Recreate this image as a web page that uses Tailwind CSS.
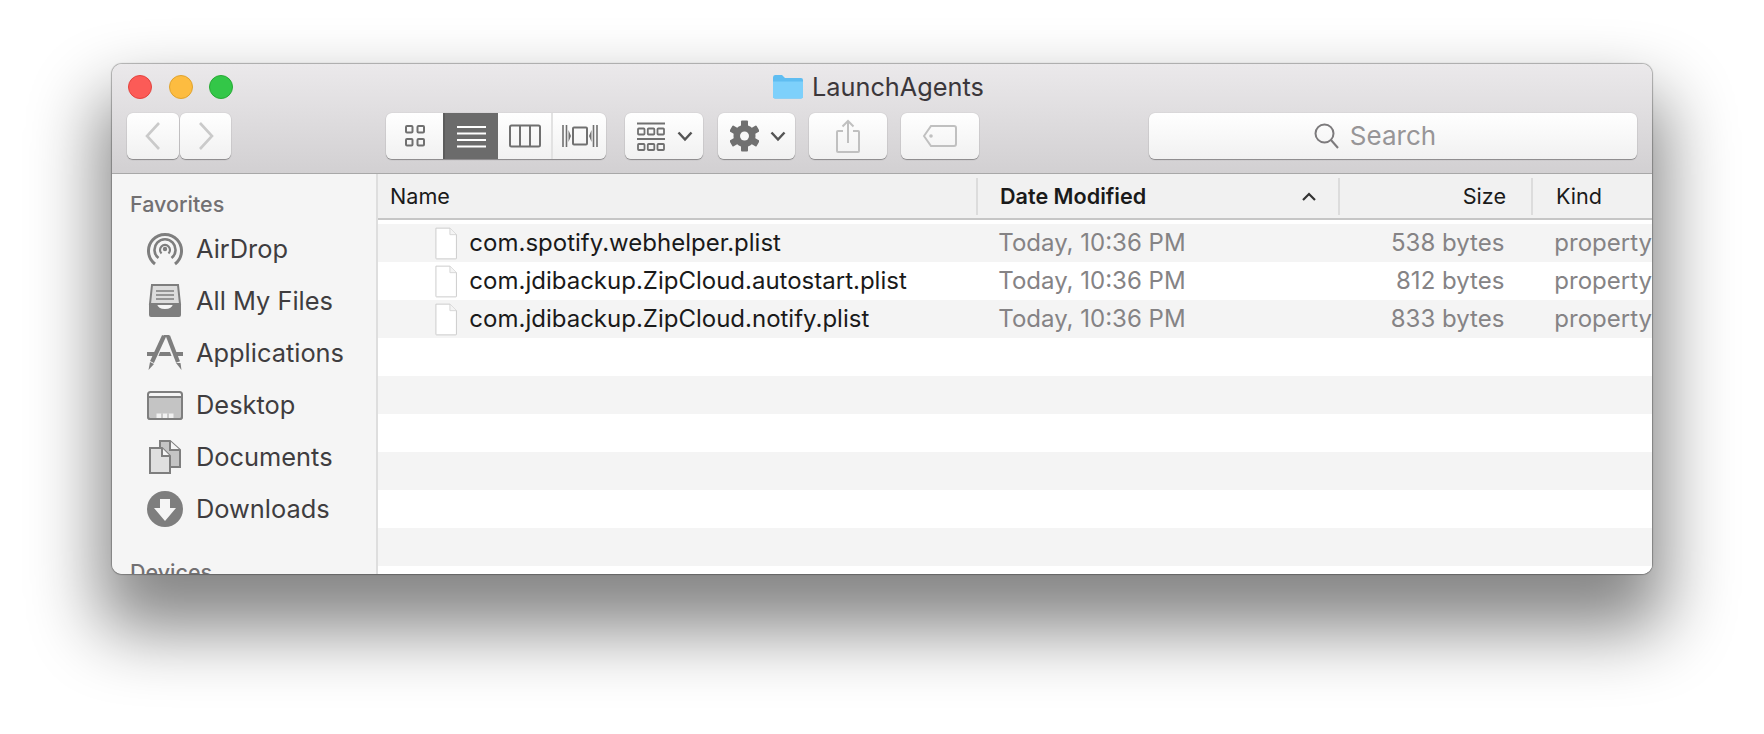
<!DOCTYPE html>
<html>
<head>
<meta charset="utf-8">
<script src="https://cdn.jsdelivr.net/npm/@tailwindcss/browser@4"></script>
</head>
<body class="bg-white overflow-hidden font-['Inter','Liberation_Sans',sans-serif]">
<div class="w-[1764px] h-[734px] pt-[64px] pl-[112px] overflow-hidden bg-white">
  <div class="w-[1540px] h-[510px] rounded-[10px] overflow-hidden flex flex-col shadow-[0_0_1px_1px_rgba(0,0,0,0.28),0_44px_70px_12px_rgba(0,0,0,0.48)]">
    <!-- toolbar -->
    <div class="h-[110px] shrink-0 flex flex-col bg-gradient-to-b from-[#ebe9eb] to-[#d2d0d2] border-b border-[#a8a8a8]">
      <div class="h-[49px] shrink-0 flex items-center pb-[4px]">
        <div class="flex gap-[16.5px] pl-[16px]">
          <div class="w-[24px] h-[24px] rounded-full bg-[#fc5b57] border border-[#e3433e]"></div>
          <div class="w-[24px] h-[24px] rounded-full bg-[#fdbc40] border border-[#e0a32e]"></div>
          <div class="w-[24px] h-[24px] rounded-full bg-[#33c748] border border-[#27aa35]"></div>
        </div>
        <svg class="ml-[540px]" width="30" height="25" viewBox="0 0 30 25"><path d="M0 3.5Q0 1 2 1H9L12 4H28Q30 4 30 6V22.5Q30 24.5 28 24.5H2Q0 24.5 0 22.5Z" fill="#5fbdf1"/><path d="M0 7.5H30V22.5Q30 24.5 28 24.5H2Q0 24.5 0 22.5Z" fill="#7dd0fb"/></svg>
        <span class="ml-[9px] text-[25.3px] leading-none text-[#3b373b]">LaunchAgents</span>
      </div>
      <div class="flex h-[46px] ml-[15px]">
        <!-- back / forward -->
        <div class="w-[52px] h-[46px] rounded-[6px] bg-gradient-to-b from-white to-[#f1f1f1] shadow-[0_1px_1px_rgba(0,0,0,0.35),0_0_1px_rgba(0,0,0,0.25)] flex items-center justify-center">
          <svg width="16" height="30" viewBox="0 0 16 30"><path d="M14 2L2 15L14 28" fill="none" stroke="#cacaca" stroke-width="2.6"/></svg>
        </div>
        <div class="ml-[1px] w-[51px] h-[46px] rounded-[6px] bg-gradient-to-b from-white to-[#f1f1f1] shadow-[0_1px_1px_rgba(0,0,0,0.35),0_0_1px_rgba(0,0,0,0.25)] flex items-center justify-center">
          <svg width="16" height="30" viewBox="0 0 16 30"><path d="M2 2L14 15L2 28" fill="none" stroke="#cacaca" stroke-width="2.6"/></svg>
        </div>
        <!-- view switcher -->
        <div class="ml-[155px] w-[220px] h-[46px] flex rounded-[6px] overflow-hidden bg-gradient-to-b from-white to-[#f1f1f1] shadow-[0_1px_1px_rgba(0,0,0,0.35),0_0_1px_rgba(0,0,0,0.25)]">
          <div class="w-[57px] flex items-center justify-center">
            <svg width="20" height="22" viewBox="0 0 20 22" fill="none" stroke="#707070" stroke-width="2"><rect x="1" y="1" width="6.5" height="6.5" rx="1"/><rect x="12.5" y="1" width="6.5" height="6.5" rx="1"/><rect x="1" y="14" width="6.5" height="6.5" rx="1"/><rect x="12.5" y="14" width="6.5" height="6.5" rx="1"/></svg>
          </div>
          <div class="w-[55px] bg-[#6b6b6b] border-l-2 border-[#5c5c5c] flex items-center justify-center">
            <svg width="29" height="23" viewBox="0 0 29 23" stroke="#fff" stroke-width="2"><path d="M0 2H29M0 8.5H29M0 15H29M0 21.5H29"/></svg>
          </div>
          <div class="w-[53px] flex items-center justify-center">
            <svg width="32" height="24" viewBox="0 0 32 24" fill="none" stroke="#707070" stroke-width="2"><rect x="1" y="1.5" width="30" height="21" rx="1.5"/><path d="M11 1.5V22.5M21 1.5V22.5"/></svg>
          </div>
          <div class="w-[55px] border-l-2 border-[#e2e2e2] flex items-center justify-center">
            <svg width="36" height="24" viewBox="0 0 36 24" fill="none" stroke="#707070" stroke-width="2"><rect x="11" y="3.500" width="14" height="17" rx="1"/><path d="M1 1V23M4.500 1V23M35 1V23M31.500 1V23" stroke-width="1.600"/><path d="M6.500 6L9 12L6.500 18ZM29.500 6L27 12L29.500 18Z" fill="#707070" stroke="none"/></svg>
          </div>
        </div>
        <!-- arrange -->
        <div class="ml-[19px] w-[78px] h-[46px] rounded-[6px] bg-gradient-to-b from-white to-[#f1f1f1] shadow-[0_1px_1px_rgba(0,0,0,0.35),0_0_1px_rgba(0,0,0,0.25)] flex items-center pl-[12px]">
          <svg width="28" height="29" viewBox="0 0 28 29" fill="none" stroke="#707070" stroke-width="1.800"><path d="M0 1.500H28M0 17H28" stroke-width="2"/><rect x="1" y="6.500" width="6.500" height="6" rx=".8"/><rect x="10.800" y="6.500" width="6.500" height="6" rx=".8"/><rect x="20.500" y="6.500" width="6.500" height="6" rx=".8"/><rect x="1" y="22" width="6.500" height="6" rx=".8"/><rect x="10.800" y="22" width="6.500" height="6" rx=".8"/><rect x="20.500" y="22" width="6.500" height="6" rx=".8"/></svg>
          <svg class="ml-[12px]" width="16" height="11" viewBox="0 0 16 11"><path d="M1.500 1.500L8 8.500L14.500 1.500" fill="none" stroke="#555" stroke-width="2.500"/></svg>
        </div>
        <!-- gear -->
        <div class="ml-[15px] w-[77px] h-[46px] rounded-[6px] bg-gradient-to-b from-white to-[#f1f1f1] shadow-[0_1px_1px_rgba(0,0,0,0.35),0_0_1px_rgba(0,0,0,0.25)] flex items-center pl-[12px]">
          <svg width="29" height="32" viewBox="-14.500 -16 29 32"><g fill="#707070"><rect x="-3.500" y="-15.500" width="7" height="31" rx="1"/><rect x="-3.500" y="-15.500" width="7" height="31" rx="1" transform="rotate(60)"/><rect x="-3.500" y="-15.500" width="7" height="31" rx="1" transform="rotate(120)"/><circle r="11"/></g><circle r="4.500" fill="#f8f8f8"/></svg>
          <svg class="ml-[11px]" width="16" height="11" viewBox="0 0 16 11"><path d="M1.500 1.500L8 8.500L14.500 1.500" fill="none" stroke="#555" stroke-width="2.500"/></svg>
        </div>
        <!-- share -->
        <div class="ml-[14px] w-[78px] h-[46px] rounded-[6px] bg-gradient-to-b from-white to-[#f1f1f1] shadow-[0_1px_1px_rgba(0,0,0,0.35),0_0_1px_rgba(0,0,0,0.25)] flex items-center justify-center">
          <svg width="24" height="34" viewBox="0 0 24 34" fill="none" stroke="#c0c0c0" stroke-width="2"><path d="M7 12H2Q1 12 1 13V32Q1 33 2 33H22Q23 33 23 32V13Q23 12 22 12H17"/><path d="M12 24V2M6.500 7.500L12 2L17.500 7.500"/></svg>
        </div>
        <!-- tag -->
        <div class="ml-[14px] w-[78px] h-[46px] rounded-[6px] bg-gradient-to-b from-white to-[#f1f1f1] shadow-[0_1px_1px_rgba(0,0,0,0.35),0_0_1px_rgba(0,0,0,0.25)] flex items-center justify-center">
          <svg width="34" height="22" viewBox="0 0 34 22" fill="none" stroke="#c0c0c0" stroke-width="2"><path d="M8 1H31Q33 1 33 3V19Q33 21 31 21H8L1 11Z"/><circle cx="8" cy="11" r="1.800" fill="#c0c0c0" stroke="none"/></svg>
        </div>
        <!-- search -->
        <div class="ml-[170px] w-[488px] h-[46px] rounded-[6px] bg-gradient-to-b from-white to-[#f1f1f1] shadow-[0_1px_1px_rgba(0,0,0,0.35),0_0_1px_rgba(0,0,0,0.25)] flex items-center justify-center pr-[36px]">
          <svg width="25" height="26" viewBox="0 0 25 26" fill="none" stroke="#7c7a7c" stroke-width="2"><circle cx="10.500" cy="10.500" r="9"/><path d="M17 17L24 25"/></svg>
          <span class="ml-[11px] text-[26px] leading-none text-[#979597]">Search</span>
        </div>
      </div>
    </div>
    <!-- body -->
    <div class="flex flex-1 min-h-0">
      <!-- sidebar -->
      <div class="w-[266px] shrink-0 bg-[#f5f5f5] border-r-2 border-[#dedede] overflow-hidden pl-[18px] pt-[18px]">
        <div class="text-[21.500px] leading-[24px] font-medium text-[#727072] h-[24px]">Favorites</div>
        <div class="mt-[7px] flex flex-col text-[25.400px] text-[#3f3d3f]">
          <div class="h-[52px] flex items-center">
            <svg class="ml-[17px] w-[36px]" height="36" viewBox="0 0 36 36" fill="none" stroke="#7e7e7e"><path d="M8 33A16.500 16.500 0 1 1 28 33" stroke-width="3"/><path d="M11.500 27A10.500 10.500 0 1 1 24.500 27" stroke-width="2.600"/><path d="M14.500 22.500A5 5 0 1 1 21.500 22.500" stroke-width="2.200"/><circle cx="18" cy="18" r="2.200" fill="#7e7e7e" stroke="none"/></svg>
            <span class="ml-[13px]">AirDrop</span>
          </div>
          <div class="h-[52px] flex items-center">
            <svg class="ml-[17px] w-[36px]" height="34" viewBox="0 0 36 34"><path d="M5 1H31L33 20H3Z" fill="#dcdcdc" stroke="#7e7e7e" stroke-width="2"/><path d="M9 7H27M9 11H27M9 15H27" stroke="#7e7e7e" stroke-width="1.600"/><path d="M2 20H10Q11 25 18 25Q25 25 26 20H34V31Q34 33 32 33H4Q2 33 2 31Z" fill="#7e7e7e"/></svg>
            <span class="ml-[13px]">All My Files</span>
          </div>
          <div class="h-[52px] flex items-center">
            <svg class="ml-[17px] w-[36px]" height="36" viewBox="0 0 36 36"><path d="M0 17H9L7 21H0ZM27 17H36V21H29ZM13 17H23L24.500 21H11.500Z" fill="#7e7e7e"/><path d="M21 1L31 27" stroke="#7e7e7e" stroke-width="4.200" fill="none"/><path d="M29 28H33.500L34.500 35Z" fill="#7e7e7e"/><path d="M17 1L5 27" stroke="#7e7e7e" stroke-width="4.200" fill="none"/><path d="M3 27L7 29L1.500 35Z" fill="#7e7e7e"/><path d="M16.500 1H22" stroke="#7e7e7e" stroke-width="2"/></svg>
            <span class="ml-[13px]">Applications</span>
          </div>
          <div class="h-[52px] flex items-center">
            <svg class="ml-[17px] w-[36px]" height="29" viewBox="0 0 36 29"><rect x="1" y="1" width="34" height="27" rx="2.500" fill="#f5f5f5" stroke="#7e7e7e" stroke-width="2"/><path d="M1 6H35V25.500Q35 28 32.500 28H3.500Q1 28 1 25.500Z" fill="#c4c4c4" stroke="#7e7e7e" stroke-width="2"/><path d="M9.500 22.500H26.500V27H9.500Z" fill="#f1f1f1"/><path d="M15 22.500V27M21 22.500V27" stroke="#a0a0a0" stroke-width="1"/></svg>
            <span class="ml-[13px]">Desktop</span>
          </div>
          <div class="h-[52px] flex items-center">
            <svg class="ml-[19px] w-[32px]" height="34" viewBox="0 0 32 34"><path d="M11 1H21L31 10V27H11Z" fill="#c4c4c4" stroke="#7e7e7e" stroke-width="2"/><path d="M21 1V10H31" fill="#f5f5f5" stroke="#7e7e7e" stroke-width="2"/><path d="M1 8H13L21 16V33H1Z" fill="#e0e0e0" stroke="#7e7e7e" stroke-width="2"/><path d="M13 8V16H21" fill="#f5f5f5" stroke="#7e7e7e" stroke-width="2"/></svg>
            <span class="ml-[15px]">Documents</span>
          </div>
          <div class="h-[52px] flex items-center">
            <svg class="ml-[17px] w-[36px]" height="36" viewBox="0 0 36 36"><circle cx="18" cy="18" r="18" fill="#7e7e7e"/><path d="M13 8H23V17H29L18 30L7 17H13Z" fill="#f5f5f5"/></svg>
            <span class="ml-[13px]">Downloads</span>
          </div>
        </div>
        <div class="mt-[25px] text-[21.500px] leading-[24px] font-medium text-[#727072]">Devices</div>
      </div>
      <!-- list -->
      <div class="flex-1 min-w-0 overflow-hidden bg-white">
        <div class="h-[46px] bg-[#f1f1f1] border-b-2 border-[#c6c6c6] flex items-center text-[21.600px] text-[#1a1a1a] whitespace-nowrap">
          <div class="w-[600px] shrink-0 pl-[12px] h-[37px] flex items-center border-r-2 border-[#dcdcdc]">Name</div>
          <div class="w-[362px] shrink-0 pl-[22px] pr-[22px] h-[37px] flex items-center justify-between border-r-2 border-[#dcdcdc]"><span class="font-semibold">Date Modified</span>
            <svg width="14" height="9" viewBox="0 0 14 9"><path d="M1 8L7 2L13 8" fill="none" stroke="#333" stroke-width="2.200"/></svg>
          </div>
          <div class="w-[193px] shrink-0 pr-[25px] h-[37px] flex items-center justify-end border-r-2 border-[#dcdcdc]">Size</div>
          <div class="pl-[23px]">Kind</div>
        </div>
        <div class="h-[4px]"></div>
        <div class="text-[24px] whitespace-nowrap">
          <div class="h-[38px] bg-[#f4f4f4] flex items-center">
            <svg class="ml-[57px]" width="24" height="35" viewBox="0 0 24 35"><path d="M1 1H16L23 8V33.500Q23 34 22.500 34H1.500Q1 34 1 33.500Z" fill="#fff" stroke="#c9c9c9"/><path d="M16 1V8H23" fill="#f4f4f4" stroke="#d4d4d4"/></svg>
            <div class="ml-[12px] w-[529px] shrink-0 text-[#1a1a1a]">com.spotify.webhelper.plist</div>
            <div class="w-[300px] shrink-0 text-[#858385]">Today, 10:36 PM</div>
            <div class="w-[206px] shrink-0 text-right text-[#858385]">538 bytes</div>
            <div class="pl-[50px] text-[#858385]">property</div>
          </div>
          <div class="h-[38px] bg-white flex items-center">
            <svg class="ml-[57px]" width="24" height="35" viewBox="0 0 24 35"><path d="M1 1H16L23 8V33.500Q23 34 22.500 34H1.500Q1 34 1 33.500Z" fill="#fff" stroke="#c9c9c9"/><path d="M16 1V8H23" fill="#f4f4f4" stroke="#d4d4d4"/></svg>
            <div class="ml-[12px] w-[529px] shrink-0 text-[#1a1a1a]">com.jdibackup.ZipCloud.autostart.plist</div>
            <div class="w-[300px] shrink-0 text-[#858385]">Today, 10:36 PM</div>
            <div class="w-[206px] shrink-0 text-right text-[#858385]">812 bytes</div>
            <div class="pl-[50px] text-[#858385]">property</div>
          </div>
          <div class="h-[38px] bg-[#f4f4f4] flex items-center">
            <svg class="ml-[57px]" width="24" height="35" viewBox="0 0 24 35"><path d="M1 1H16L23 8V33.500Q23 34 22.500 34H1.500Q1 34 1 33.500Z" fill="#fff" stroke="#c9c9c9"/><path d="M16 1V8H23" fill="#f4f4f4" stroke="#d4d4d4"/></svg>
            <div class="ml-[12px] w-[529px] shrink-0 text-[#1a1a1a]">com.jdibackup.ZipCloud.notify.plist</div>
            <div class="w-[300px] shrink-0 text-[#858385]">Today, 10:36 PM</div>
            <div class="w-[206px] shrink-0 text-right text-[#858385]">833 bytes</div>
            <div class="pl-[50px] text-[#858385]">property</div>
          </div>
          <div class="h-[38px] bg-white"></div>
          <div class="h-[38px] bg-[#f4f4f4]"></div>
          <div class="h-[38px] bg-white"></div>
          <div class="h-[38px] bg-[#f4f4f4]"></div>
          <div class="h-[38px] bg-white"></div>
          <div class="h-[38px] bg-[#f4f4f4]"></div>
          <div class="h-[38px] bg-white"></div>
        </div>
      </div>
    </div>
  </div>
</div>
</body>
</html>
